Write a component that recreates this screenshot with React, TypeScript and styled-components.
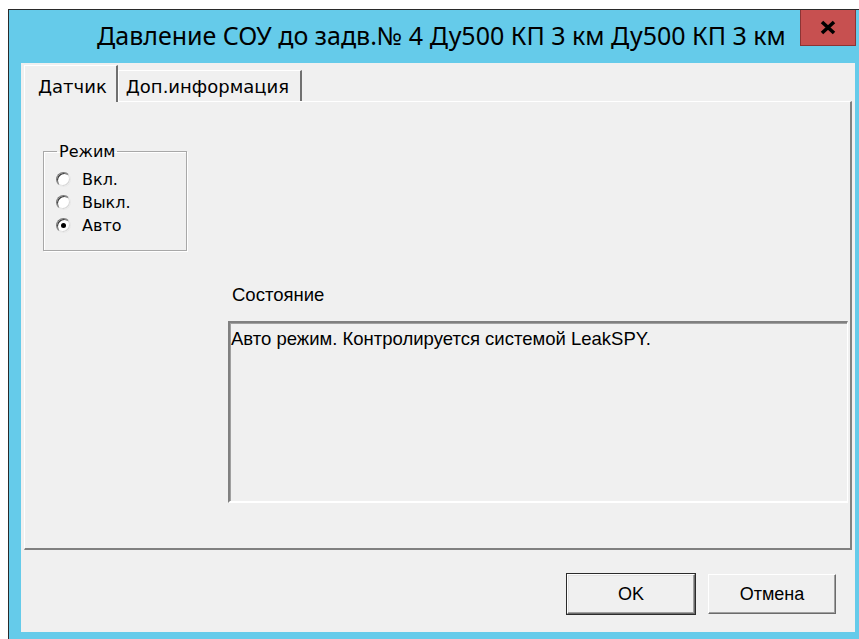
import * as React from "react";
import styled, { createGlobalStyle } from "styled-components";

const GlobalStyle = createGlobalStyle`
  html, body {
    margin: 0;
    padding: 0;
    width: 859px;
    height: 639px;
    overflow: hidden;
    background: #ffffff;
  }
`;

const uiFont = `"DejaVu Sans", "Liberation Sans", sans-serif`;
const narrowFont = `"Liberation Sans", "DejaVu Sans", sans-serif`;

const Window = styled.div`
  margin: 9px 0 0 8px;
  width: 834px;
  height: 640px;
  border-left: 1px solid #2a2a2a;
  border-top: 1px solid #2a2a2a;
  background: #65cbea;
  padding: 0 12px;
  box-sizing: content-box;
`;

const TitleBar = styled.div`
  height: 53px;
  display: flex;
  align-items: flex-start;
`;

const Caption = styled.div`
  flex: 1;
  min-width: 0;
  padding: 8px 0 0 76px;
  font-family: "Noto Sans", "Open Sans", sans-serif;
  font-size: 25px;
  line-height: 34px;
  color: #000;
  white-space: nowrap;
  overflow: hidden;
`;

const CloseButton = styled.div`
  flex-shrink: 0;
  width: 56px;
  height: 36px;
  margin-right: -1px;
  box-sizing: border-box;
  background: #c75050;
  border: 1px solid #8c3434;
  border-top: none;
  display: flex;
  align-items: center;
  justify-content: center;
`;

const Client = styled.div`
  width: 834px;
  height: 569px;
  background: #f0f0f0;
  box-sizing: border-box;
  padding: 2px 3px 0 3px;
  display: flex;
  flex-direction: column;
`;

const TabStrip = styled.div`
  display: flex;
  align-items: flex-end;
  height: 36px;
`;

const Tab = styled.div<{ $active?: boolean }>`
  height: ${(p) => (p.$active ? 37 : 31)}px;
  box-sizing: border-box;
  padding: ${(p) => (p.$active ? "10px 9px 0 13px" : "5px 11px 0 7px")};
  border-top: 1px solid #ffffff;
  border-left: 1px solid #ffffff;
  border-right: 2px solid #707070;
  margin-bottom: ${(p) => (p.$active ? -1 : 0)}px;
  background: #f0f0f0;
  position: relative;
  z-index: ${(p) => (p.$active ? 1 : 0)};
  font-family: ${uiFont};
  font-size: 18px;
  line-height: 21px;
  color: #000;
  white-space: nowrap;
`;

const Page = styled.div`
  width: 828px;
  height: 449px;
  box-sizing: border-box;
  border-top: 1px solid #ffffff;
  border-left: 1px solid #ffffff;
  border-right: 2px solid #808080;
  border-bottom: 2px solid #808080;
  display: grid;
  grid-template-columns: 185px 1fr;
  padding: 40px 1px 0 18px;
`;

const GroupBox = styled.fieldset`
  margin: 0;
  width: 144px;
  height: 109px;
  box-sizing: border-box;
  border: 1px solid #a8a8a8;
  box-shadow: inset 1px 1px 0 #ffffff, 1px 1px 0 #ffffff;
  padding: 7px 0 0 12px;
`;

const Legend = styled.legend`
  padding: 0 2px;
  margin-left: 1px;
  font-family: ${uiFont};
  font-size: 16px;
  line-height: 19px;
  color: #000;
`;

const RadioRow = styled.label`
  display: flex;
  align-items: center;
  gap: 11px;
  height: 23px;
  font-family: ${uiFont};
  font-size: 16px;
  color: #000;
`;

const RadioMark = styled.span<{ $checked?: boolean }>`
  width: 15px;
  height: 15px;
  box-sizing: border-box;
  border-radius: 50%;
  border: 1px solid;
  border-color: #7a7a7a #e8e8e8 #e8e8e8 #7a7a7a;
  background: #ffffff;
  box-shadow: inset 1px 1px 0 #3c3c3c, inset -1px -1px 0 #d8d8d8;
  display: flex;
  align-items: center;
  justify-content: center;

  &::after {
    content: "";
    width: 5px;
    height: 5px;
    border-radius: 50%;
    background: ${(p) => (p.$checked ? "#000" : "transparent")};
  }
`;

const StatusColumn = styled.div`
  display: flex;
  flex-direction: column;
  padding-top: 142px;
`;

const StatusLabel = styled.div`
  padding-left: 4px;
  height: 37px;
  font-family: ${narrowFont};
  font-size: 18.5px;
  line-height: 21px;
  color: #000;
`;

const StatusBox = styled.div`
  width: 620px;
  height: 182px;
  box-sizing: border-box;
  border-top: 2px solid #808080;
  border-left: 2px solid #808080;
  border-right: 1px solid #ffffff;
  border-bottom: 2px solid #ffffff;
  box-shadow: inset 1px 1px 0 #a0a0a0;
  padding: 5px 0 0 1px;
  font-family: ${narrowFont};
  font-size: 18.5px;
  line-height: 22px;
  color: #000;
`;

const ButtonRow = styled.div`
  display: flex;
  justify-content: flex-end;
  gap: 13px;
  padding: 24px 16px 0 0;
`;

const Button = styled.button<{ $default?: boolean }>`
  width: 128px;
  height: 40px;
  box-sizing: border-box;
  margin: 0;
  background: #f0f0f0;
  border: 1px solid;
  border-color: #ffffff #6b6b6b #6b6b6b #ffffff;
  outline: ${(p) => (p.$default ? "1px solid #2b2b2b" : "none")};
  outline-offset: 0;
  box-shadow: ${(p) =>
    p.$default
      ? "inset -1px -1px 0 #a0a0a0, inset 1px 1px 0 #e3e3e3"
      : "inset -1px -1px 0 #a0a0a0"};
  font-family: ${narrowFont};
  font-size: 18px;
  color: #000;
  padding: 0;
`;

const CloseGlyph = () => (
  <svg width="16" height="15" viewBox="0 0 16 15">
    <path
      d="M2 2 L14 13 M14 2 L2 13"
      stroke="#000"
      strokeWidth="3.6"
      strokeLinecap="butt"
      fill="none"
    />
  </svg>
);

const modes = [
  { label: "Вкл.", checked: false },
  { label: "Выкл.", checked: false },
  { label: "Авто", checked: true },
];

const App = () => (
  <>
    <GlobalStyle />
    <Window>
      <TitleBar>
        <Caption>Давление СОУ до задв.№ 4 Ду500 КП 3 км Ду500 КП 3 км</Caption>
        <CloseButton>
          <CloseGlyph />
        </CloseButton>
      </TitleBar>
      <Client>
        <TabStrip>
          <Tab $active>Датчик</Tab>
          <Tab>Доп.информация</Tab>
        </TabStrip>
        <Page>
          <div>
            <GroupBox>
              <Legend>Режим</Legend>
              {modes.map((m) => (
                <RadioRow key={m.label}>
                  <RadioMark $checked={m.checked} />
                  {m.label}
                </RadioRow>
              ))}
            </GroupBox>
          </div>
          <StatusColumn>
            <StatusLabel>Состояние</StatusLabel>
            <StatusBox>Авто режим. Контролируется системой LeakSPY.</StatusBox>
          </StatusColumn>
        </Page>
        <ButtonRow>
          <Button $default>OK</Button>
          <Button>Отмена</Button>
        </ButtonRow>
      </Client>
    </Window>
  </>
);

export default App;
